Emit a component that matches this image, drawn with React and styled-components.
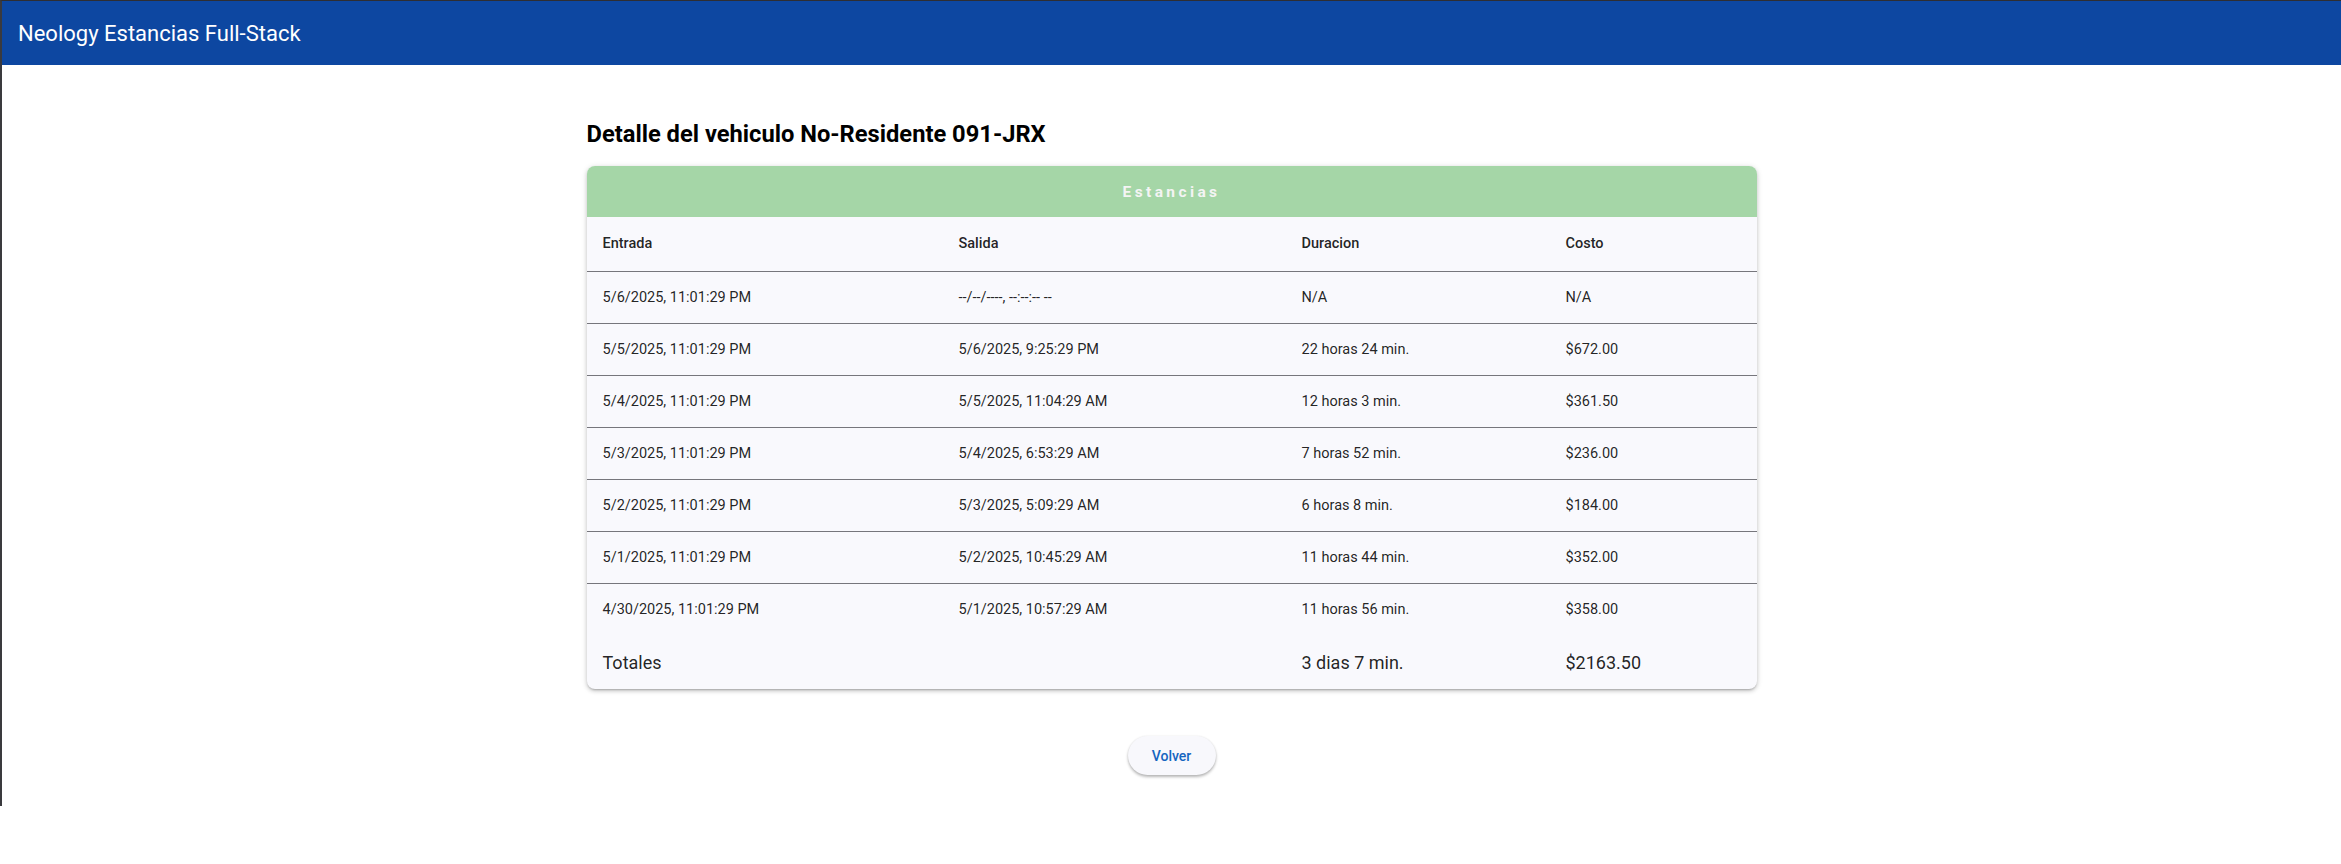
import React from "react";
import styled, { createGlobalStyle } from "styled-components";

const GlobalStyle = createGlobalStyle`
  html, body {
    margin: 0;
    padding: 0;
    background: #fff;
  }
  body {
    font-family: Roboto, "Noto Sans", "Liberation Sans", sans-serif;
    color: rgba(0, 0, 0, 0.87);
  }
`;

const stays = [
  { entrada: "5/6/2025, 11:01:29 PM", salida: "--/--/----, --:--:-- --", duracion: "N/A", costo: "N/A" },
  { entrada: "5/5/2025, 11:01:29 PM", salida: "5/6/2025, 9:25:29 PM", duracion: "22 horas 24 min.", costo: "$672.00" },
  { entrada: "5/4/2025, 11:01:29 PM", salida: "5/5/2025, 11:04:29 AM", duracion: "12 horas 3 min.", costo: "$361.50" },
  { entrada: "5/3/2025, 11:01:29 PM", salida: "5/4/2025, 6:53:29 AM", duracion: "7 horas 52 min.", costo: "$236.00" },
  { entrada: "5/2/2025, 11:01:29 PM", salida: "5/3/2025, 5:09:29 AM", duracion: "6 horas 8 min.", costo: "$184.00" },
  { entrada: "5/1/2025, 11:01:29 PM", salida: "5/2/2025, 10:45:29 AM", duracion: "11 horas 44 min.", costo: "$352.00" },
  { entrada: "4/30/2025, 11:01:29 PM", salida: "5/1/2025, 10:57:29 AM", duracion: "11 horas 56 min.", costo: "$358.00" },
];

const columns = [
  { label: "Entrada", width: 356 },
  { label: "Salida", width: 343 },
  { label: "Duracion", width: 264 },
  { label: "Costo", width: 207 },
];

const App = () => {
  return (
    <>
      <GlobalStyle />
      <Frame>
        <AppBar>
          <BarTitle>Neology Estancias Full-Stack</BarTitle>
        </AppBar>
        <Content>
          <PageTitle>Detalle del vehiculo No-Residente 091-JRX</PageTitle>
          <Card>
            <CardHeader>Estancias</CardHeader>
            <Table>
              <colgroup>
                {columns.map((c) => (
                  <col key={c.label} style={{ width: c.width }} />
                ))}
              </colgroup>
              <thead>
                <tr>
                  {columns.map((c) => (
                    <HeadCell key={c.label}>{c.label}</HeadCell>
                  ))}
                </tr>
              </thead>
              <tbody>
                {stays.map((s, i) => {
                  const last = i === stays.length - 1;
                  return (
                    <tr key={i}>
                      <Cell $noBorder={last}>{s.entrada}</Cell>
                      <Cell $noBorder={last}>{s.salida}</Cell>
                      <Cell $noBorder={last}>{s.duracion}</Cell>
                      <Cell $noBorder={last}>{s.costo}</Cell>
                    </tr>
                  );
                })}
                <tr>
                  <TotalCell>Totales</TotalCell>
                  <TotalCell />
                  <TotalCell>3 dias 7 min.</TotalCell>
                  <TotalCell>$2163.50</TotalCell>
                </tr>
              </tbody>
            </Table>
          </Card>
          <BackButton>Volver</BackButton>
        </Content>
      </Frame>
    </>
  );
};

const Frame = styled.div`
  height: 806px;
  border-top: 1px solid #2e2e32;
  border-left: 2px solid #3a3a3e;
  box-sizing: border-box;
  display: flex;
  flex-direction: column;
`;

const AppBar = styled.header`
  height: 64px;
  background: #0d47a1;
  display: flex;
  align-items: center;
  padding: 0 16px;
  flex-shrink: 0;
`;

const BarTitle = styled.div`
  color: #fff;
  font-size: 22px;
  font-weight: 400;
`;

const Content = styled.main`
  display: flex;
  flex-direction: column;
  align-items: center;
  padding-top: 53px;
`;

const PageTitle = styled.h1`
  width: 1170px;
  margin: 0 0 16px 0;
  font-size: 23.7px;
  line-height: 32px;
  font-weight: 700;
  color: #000;
`;

const Card = styled.div`
  width: 1170px;
  background: #f9f9fd;
  border-radius: 8px;
  overflow: hidden;
  box-shadow: 0 2px 2px -1px rgba(0, 0, 0, 0.2), 0 2px 4px 0 rgba(0, 0, 0, 0.14),
    0 1px 6px 0 rgba(0, 0, 0, 0.12);
`;

const CardHeader = styled.div`
  height: 51px;
  background: #a5d6a7;
  color: #f4f4f4;
  display: flex;
  align-items: center;
  justify-content: center;
  font-size: 15.5px;
  font-weight: 700;
  letter-spacing: 3.4px;
`;

const Table = styled.table`
  width: 100%;
  table-layout: fixed;
  border-collapse: collapse;
`;

const HeadCell = styled.th`
  text-align: left;
  padding: 16px;
  font-size: 14.5px;
  line-height: 22px;
  font-weight: 500;
  color: rgba(0, 0, 0, 0.87);
  border-bottom: 1px solid #76767c;
`;

const Cell = styled.td`
  padding: 16px;
  font-size: 14.5px;
  line-height: 19px;
  font-weight: 400;
  color: rgba(0, 0, 0, 0.87);
  border-bottom: ${(p) => (p.$noBorder ? "none" : "1px solid #76767c")};
  white-space: nowrap;
`;

const TotalCell = styled.td`
  padding: 17px 16px 16px;
  font-size: 18px;
  line-height: 21px;
  font-weight: 400;
  color: rgba(0, 0, 0, 0.87);
  white-space: nowrap;
`;

const BackButton = styled.button`
  margin-top: 47px;
  width: 88px;
  height: 39px;
  border: none;
  border-radius: 20px;
  background: #f8f8fc;
  color: #1565c0;
  font-family: Roboto, "Noto Sans", sans-serif;
  font-size: 14px;
  font-weight: 500;
  cursor: pointer;
  box-shadow: 0 2px 3px rgba(0, 0, 0, 0.28), 0 0 2px rgba(0, 0, 0, 0.08);
`;

export default App;
